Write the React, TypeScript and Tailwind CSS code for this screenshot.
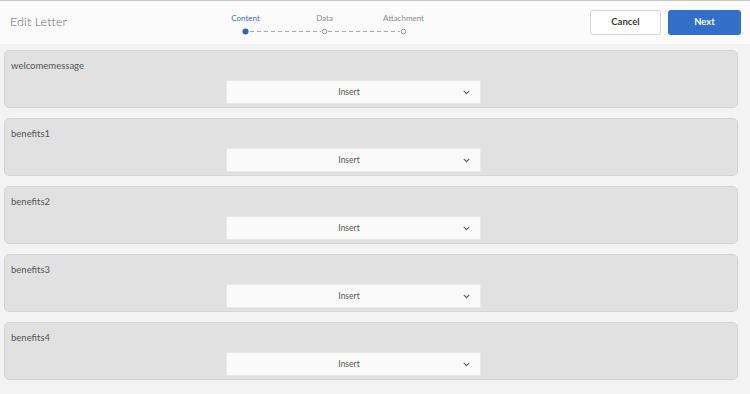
import React from "react";

const fields = ["welcomemessage", "benefits1", "benefits2", "benefits3", "benefits4"];

function Stepper() {
  const steps = [
    { label: "Content", active: true },
    { label: "Data", active: false },
    { label: "Attachment", active: false },
  ];
  return (
    <div className="flex flex-col w-[237px] pt-[2px]">
      <div className="grid grid-cols-3">
        {steps.map((s) => (
          <div
            key={s.label}
            className={`text-center text-[8px] leading-[12px] ${s.active ? "text-[#3a6db5]" : "text-[#8a8a8a]"}`}
          >
            {s.label}
          </div>
        ))}
      </div>
      <svg width="237" height="9" viewBox="0 0 237 9" className="mt-[3px]">
        <line x1="44" y1="4.5" x2="115" y2="4.5" stroke="#a9a9a9" strokeWidth="1" strokeDasharray="4 3" />
        <line x1="122" y1="4.5" x2="194" y2="4.5" stroke="#a9a9a9" strokeWidth="1" strokeDasharray="4 3" />
        <circle cx="39.5" cy="4.5" r="3" fill="#2e64b0" />
        <circle cx="118.5" cy="4.5" r="2.3" fill="#fafafa" stroke="#9a9a9a" strokeWidth="1" />
        <circle cx="197.5" cy="4.5" r="2.3" fill="#fafafa" stroke="#9a9a9a" strokeWidth="1" />
      </svg>
    </div>
  );
}

function Chevron() {
  return (
    <svg width="7" height="5" viewBox="0 0 7 5">
      <path d="M0.8 0.9 L3.5 3.6 L6.2 0.9" fill="none" stroke="#666" strokeWidth="1.3" />
    </svg>
  );
}

export default function App() {
  return (
    <div
      className="w-[750px] h-[394px] overflow-hidden bg-[#f3f3f3] text-[#4a4a4a]"
      style={{ fontFamily: "Lato, 'Open Sans', sans-serif" }}
    >
      <header className="h-[44px] border-t border-[#c9c9c9] bg-[#fbfbfb] flex items-center">
        <div className="w-[206px] pl-[10px] text-[12.5px] text-[#6a6a6a] font-light tracking-[0.1px] pb-[1px]">
          Edit Letter
        </div>
        <Stepper />
        <div className="flex-1" />
        <div className="flex gap-[7px] pr-[9px]">
          <button className="w-[71px] h-[25px] bg-white border border-[#d3d3d3] rounded-[3px] text-[9.5px] font-bold text-[#3a3a3a]">
            Cancel
          </button>
          <button className="w-[73px] h-[25px] bg-[#326fc9] rounded-[3px] text-[9.5px] font-bold text-white">
            Next
          </button>
        </div>
      </header>
      <main className="pt-[6px] pl-[4px] pr-[12px] flex flex-col gap-[10px]">
        {fields.map((f) => (
          <section
            key={f}
            className="h-[58px] bg-[#e1e1e1] border border-[#d5d5d5] rounded-[5px] pt-[8px] pl-[6px]"
          >
            <div className="h-[14px] text-[9.5px] leading-[14px] text-[#555]">{f}</div>
            <div className="mt-[7px] ml-[215px] w-[255px] h-[24px] bg-[#fafafa] border border-[#e8e8e8] flex items-center pr-[10px]">
              <span className="flex-1 text-center text-[8.5px] text-[#555] pl-[8px]">Insert</span>
              <Chevron />
            </div>
          </section>
        ))}
      </main>
    </div>
  );
}
